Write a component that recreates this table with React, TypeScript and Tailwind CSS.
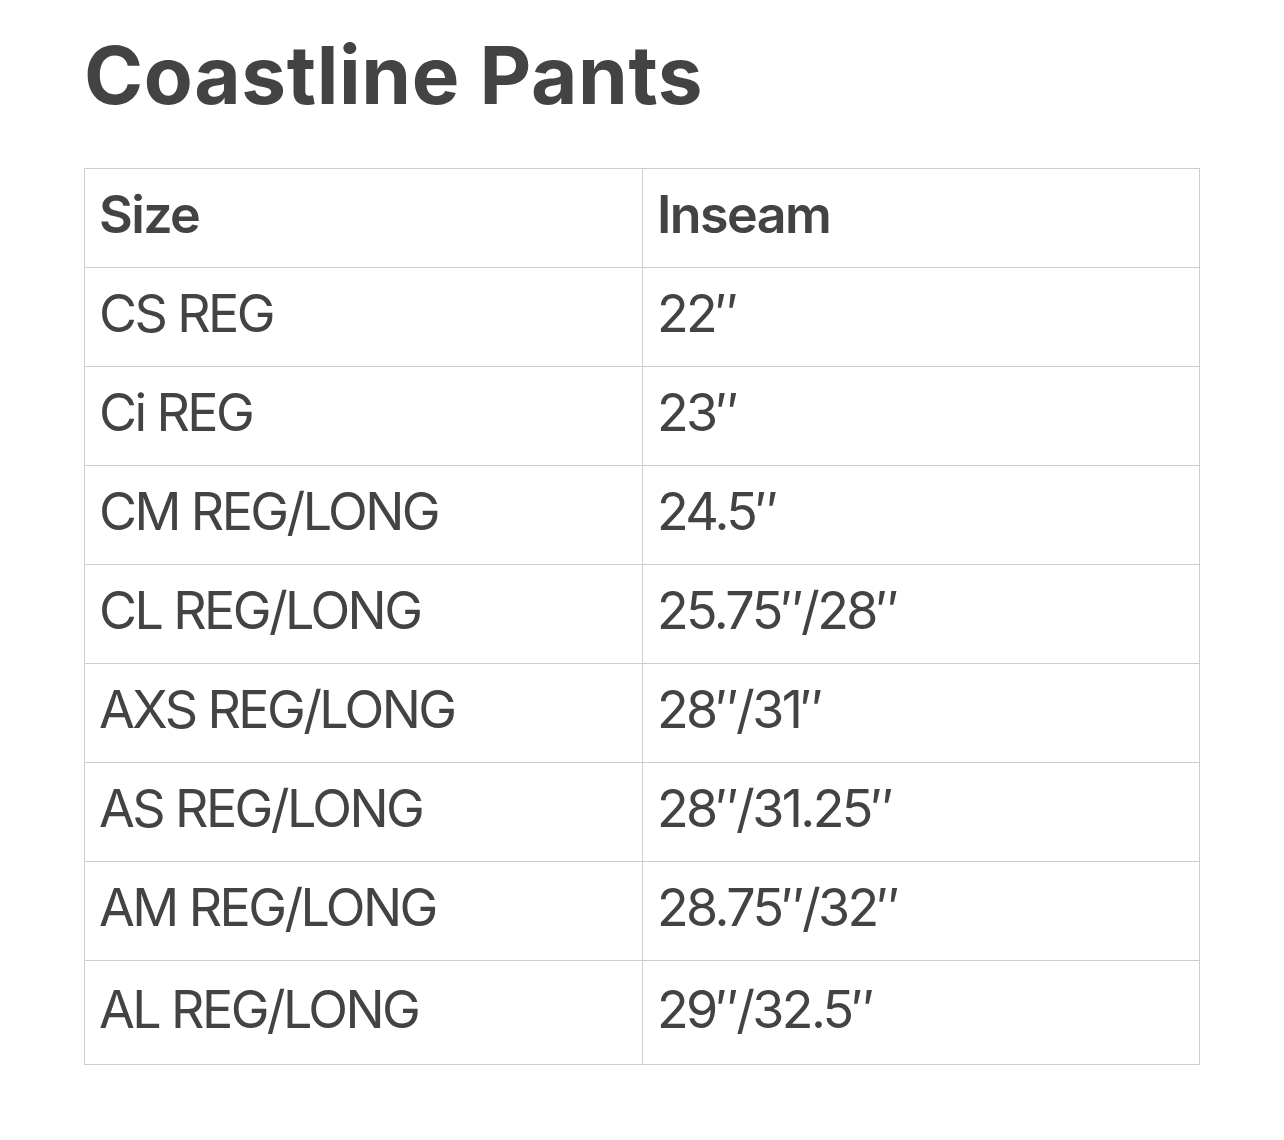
const rows: [string, string][] = [
  ["CS REG", "22″"],
  ["Ci REG", "23″"],
  ["CM REG/LONG", "24.5″"],
  ["CL REG/LONG", "25.75″/28″"],
  ["AXS REG/LONG", "28″/31″"],
  ["AS REG/LONG", "28″/31.25″"],
  ["AM REG/LONG", "28.75″/32″"],
  ["AL REG/LONG", "29″/32.5″"],
];

export default function App() {
  return (
    <div className="min-h-[1140px] w-[1284px] bg-white pl-[84px] pt-[28px] text-[#434343] [font-family:Inter,'Noto_Sans',sans-serif]">
      <h1 className="h-[140px] text-[80px] font-bold leading-[94px] tracking-[0.6px]">
        Coastline Pants
      </h1>
      <table className="w-[1116px] table-fixed border-collapse">
        <thead>
          <tr className="h-[99px]">
            <th className="w-[558px] border border-[#cdcdcd] pb-[6px] pl-[14px] text-left align-middle text-[52px] font-semibold tracking-[-1.6px]">
              Size
            </th>
            <th className="border border-[#cdcdcd] pb-[6px] pl-[14px] text-left align-middle text-[52px] font-semibold tracking-[-1.6px]">
              Inseam
            </th>
          </tr>
        </thead>
        <tbody>
          {rows.map(([size, inseam], i) => (
            <tr key={size} className={i === rows.length - 1 ? "h-[104px]" : "h-[99px]"}>
              <td className="border border-[#cdcdcd] pb-[6px] pl-[14px] text-[52px] font-normal tracking-[-2.6px]">
                {size}
              </td>
              <td className="border border-[#cdcdcd] pb-[6px] pl-[14px] text-[52px] font-normal tracking-[-2.6px]">
                {inseam}
              </td>
            </tr>
          ))}
        </tbody>
      </table>
    </div>
  );
}
